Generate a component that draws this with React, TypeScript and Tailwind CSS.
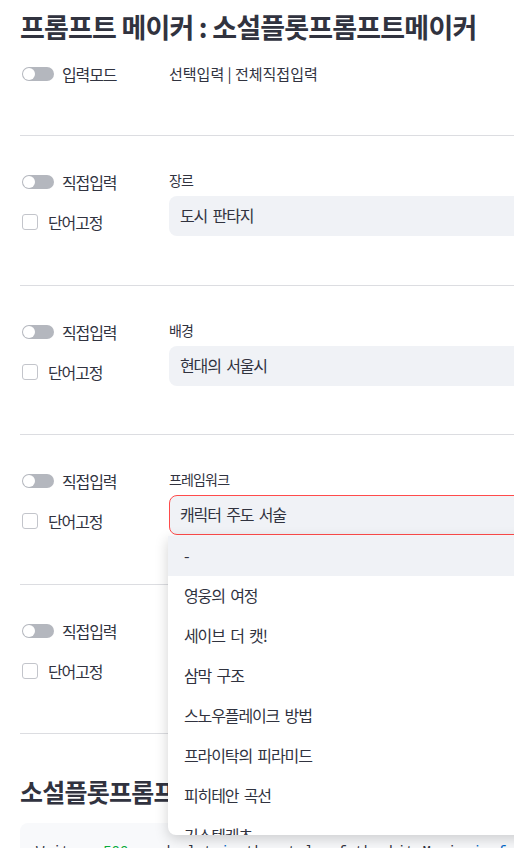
import React from "react";

const ko = "font-['Noto_Sans_CJK_KR','Noto_Sans',sans-serif]";

const Toggle = () => (
  <div className="ml-[2px] flex h-[14px] w-[32px] items-center rounded-full bg-[#b4b7be] pl-[1px]">
    <div className="h-[12px] w-[12px] rounded-full bg-white" />
  </div>
);

const Checkbox = () => (
  <div className="ml-[2px] h-[16px] w-[16px] rounded-[3px] border border-[#c3c5cb] bg-white" />
);

const frameworks = [
  "-",
  "영웅의 여정",
  "세이브 더 캣!",
  "삼막 구조",
  "스노우플레이크 방법",
  "프라이탁의 피라미드",
  "피히테안 곡선",
  "기쇼텐케츠",
];

interface SectionProps {
  label: string;
  value: string;
  open?: boolean;
}

const Section = ({ label, value, open }: SectionProps) => (
  <>
    <hr className="border-0 border-t border-[#dcdde1]" />
    <div className="grid grid-cols-[149px_1fr] pt-[34px] pb-[48.5px]">
      {/* left: toggles */}
      <div className="flex flex-col">
        <div className="flex h-6 items-center gap-[8px]">
          <Toggle />
          <span className="text-[16px] tracking-[-0.07em]">직접입력</span>
        </div>
        <div className="mt-[16px] flex h-6 items-center gap-[10px]">
          <Checkbox />
          <span className="text-[16px] tracking-[-0.07em]">단어고정</span>
        </div>
      </div>

      {/* right: select */}
      <div className="flex flex-col">
        <div className="h-[21px] text-[14px] leading-[21px] tracking-[-0.06em]">{label}</div>
        <div className="relative mt-[5px]">
          <div
            className={`flex h-10 items-center rounded-lg border bg-[#f0f2f6] pb-[2px] pl-[10px] text-[16px] tracking-[-0.07em] [word-spacing:0.18em] ${
              open ? "border-[#ff4b4b]" : "border-transparent"
            }`}
          >
            {value}
          </div>
          {open && (
            <div className="absolute left-[-1px] top-[41px] z-10 h-[299px] w-[380px] overflow-hidden rounded-b-lg bg-white shadow-[0_4px_14px_rgba(0,0,0,0.18)]">
              {frameworks.map((f, i) => (
                <div
                  key={f}
                  className={`flex h-10 items-center pb-[3px] pl-4 text-[16px] tracking-[-0.07em] [word-spacing:0.18em] ${
                    i === 0 ? "bg-[#f0f2f6]" : ""
                  }`}
                >
                  {f}
                </div>
              ))}
            </div>
          )}
        </div>
      </div>
    </div>
  </>
);

export default function App() {
  return (
    <div className={`h-[848px] w-[514px] overflow-hidden bg-white text-[#31333f] ${ko}`}>
      <div className="w-[640px] pl-5">
        <h1 className="pt-[10px] text-[27px] font-bold leading-[34px] tracking-[-0.03em]">
          프롬프트 메이커 : 소설플롯프롬프트메이커
        </h1>

        <div className="mt-[18px] mb-[49px] grid grid-cols-[149px_1fr]">
          <div className="flex h-6 items-center gap-[8px]">
            <Toggle />
            <span className="text-[16px] tracking-[-0.07em]">입력모드</span>
          </div>
          <div className="flex h-6 items-center text-[15px]">
            선택입력 | 전체직접입력
          </div>
        </div>

        <Section label="장르" value="도시 판타지" />
        <Section label="배경" value="현대의 서울시" />
        <Section label="프레임워크" value="캐릭터 주도 서술" open />
        <Section label="분위기" value="-" />
        <hr className="border-0 border-t border-[#dcdde1]" />

        <h2 className="mt-[42px] text-[25px] font-bold leading-[30px] tracking-[-0.03em]">
          소설플롯프롬프트
        </h2>

        <div className="mt-[17px] rounded-lg bg-[#f8f9fb] px-4 pt-[18px] pb-4 font-['Liberation_Mono',monospace] text-[14px] leading-[22px] whitespace-pre">
          Write a <span className="text-[#09ab3b]">500</span>-word plot{" "}
          <span className="text-[#0068c9]">in</span> the style of the hit Movie{" "}
          <span className="text-[#0068c9]">in</span>{" "}
          <span className="text-[#0068c9]">for</span>mat
        </div>
      </div>
    </div>
  );
}
